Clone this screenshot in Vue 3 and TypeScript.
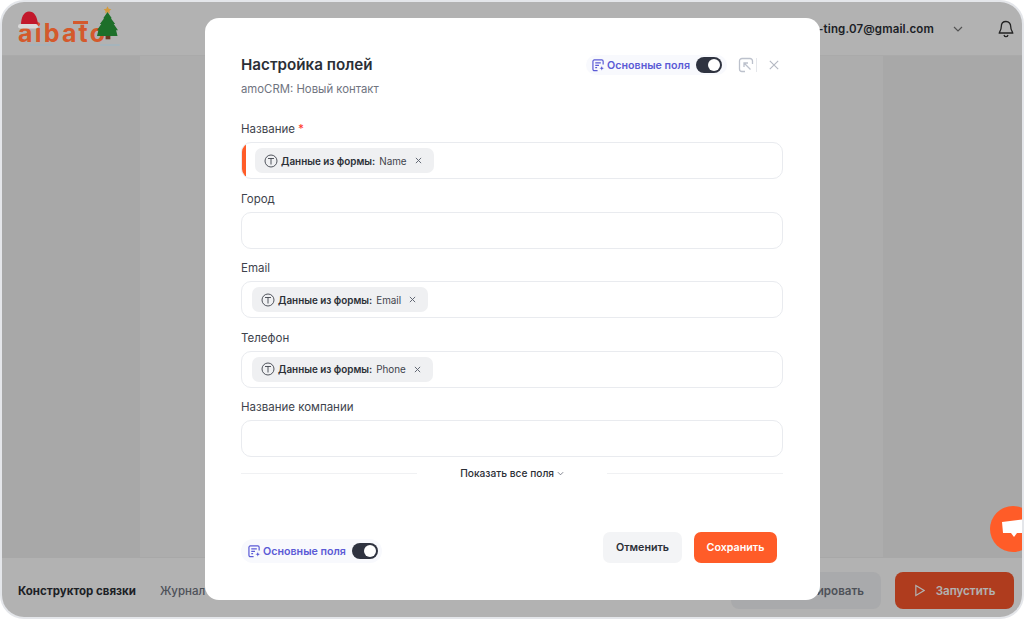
<template>
  <div class="screen">
    <div class="frame">
      <header class="topbar">
        <div class="logo">
          <span class="logo-text">aibato</span>
          <span class="macron"></span>
          <svg class="hat" viewBox="0 0 21 19" width="21" height="19">
            <path d="M3 14C3 6 6 .5 11 .5c5 0 8 4 9 13v1H3z" fill="#c2182b" />
            <rect x="0" y="13" width="20" height="4.500" rx="2.200" fill="#d9d9d9" />
          </svg>
          <svg class="tree" viewBox="0 0 22 38" width="21" height="37">
            <path d="M11 0l1.300 2.600 2.700.3-2 1.900.5 2.700L11 6.200 8.500 7.500l.5-2.700-2-1.900 2.700-.3z" fill="#d39a3c" />
            <path d="M11 6l4.500 6.500-1 0 4.500 6-1.500 0 4.500 6.500-2 0 1.500 6H0l1.500-6-1.500 0 4.500-6.500H3l4.500-6-1 0z" fill="#1d6f29" />
            <rect x="9" y="31" width="5" height="3.500" fill="#6b3a20" />
          </svg>
          <span class="snow a"></span>
          <span class="snow b"></span>
        </div>
        <div class="user">
          <span class="email">tatiana-ting.07@gmail.com</span>
          <svg class="chev" viewBox="0 0 10 6" width="10" height="6"><path d="M1 1l4 4 4-4" /></svg>
          <svg class="bell" viewBox="0 0 16 18" width="16" height="18">
            <path d="M8 1.500c-3 0-4.700 2.200-4.700 5 0 3.500-1.800 5-2 6.500h13.400c-.2-1.500-2-3-2-6.500 0-2.800-1.700-5-4.700-5zM6 15c.3 1.100 1 1.700 2 1.700s1.700-.6 2-1.700" />
          </svg>
        </div>
      </header>

      <main class="canvas">
        <div class="side left"></div>
        <div class="middle"></div>
        <div class="side right"></div>
      </main>

      <footer class="bottombar">
        <div class="tabs">
          <span class="tab active">Конструктор связки</span>
          <span class="tab">Журнал</span>
        </div>
        <div class="actions">
          <button class="btn-test">Тестировать</button>
          <button class="btn-run">
            <svg viewBox="0 0 12 14" width="11" height="13"><path d="M2 1.500l9 5.500-9 5.500z" /></svg>
            Запустить
          </button>
        </div>
      </footer>

      <div class="overlay"></div>

      <div class="chat-bubble">
        <svg viewBox="0 0 24 20" width="24" height="20"><path d="M0 3l24-3v14H15l-3 4-3-4H1z" fill="#fff" /></svg>
      </div>
    </div>

    <section class="modal">
      <div class="modal-head">
        <div>
          <h2>Настройка полей</h2>
          <p>amoCRM: Новый контакт</p>
        </div>
        <div class="head-tools">
          <div class="pill">
            <svg class="pill-icon" viewBox="0 0 14 14" width="13" height="13">
              <path d="M6 12.500H2.500a1.500 1.500 0 0 1-1.500-1.500V2.500A1.500 1.500 0 0 1 2.500 1h8A1.500 1.500 0 0 1 12 2.500V6M3.500 4.200h6M3.500 6.800h4M3.500 9.300h2" />
              <path class="spark" d="M10.500 7l.9 2.100 2.100.9-2.100.9-.9 2.100-.9-2.100-2.100-.9 2.100-.9z" />
            </svg>
            <span>Основные поля</span>
            <span class="switch"><i></i></span>
          </div>
          <span class="collapse-btn">
            <svg viewBox="0 0 16 16" width="16" height="16">
              <path d="M14.500 7V4A2.500 2.500 0 0 0 12 1.500H4A2.500 2.500 0 0 0 1.500 4v8A2.500 2.500 0 0 0 4 14.500h3M6 10V6h4M6 6l6.500 6.500" />
            </svg>
          </span>
          <span class="sep"></span>
          <svg class="close" viewBox="0 0 10 10" width="10" height="10"><path d="M.8.800l8.400 8.400M9.200.800L.8 9.200" /></svg>
        </div>
      </div>

      <div class="fields">
        <div v-for="f in fields" :key="f.label" class="field">
          <label>{{ f.label }}<b v-if="f.required"> *</b></label>
          <div class="input" :class="{ required: f.required }">
            <span v-if="f.value" class="tag">
              <svg class="t-icon" viewBox="0 0 14 14" width="14" height="14">
                <circle cx="7" cy="7" r="6" />
                <path d="M4 4.500h6M7 4.500v6" />
              </svg>
              <strong>Данные из формы:</strong>
              <span>{{ f.value }}</span>
              <svg class="tag-x" viewBox="0 0 8 8" width="7" height="7"><path d="M1 1l6 6M7 1L1 7" /></svg>
            </span>
          </div>
        </div>
      </div>

      <div class="show-all">
        <span class="line"></span>
        <span class="show-text">
          Показать все поля
          <svg viewBox="0 0 8 5" width="7" height="5"><path d="M1 1l3 3 3-3" /></svg>
        </span>
        <span class="line"></span>
      </div>

      <div class="modal-foot">
        <div class="pill big">
          <svg class="pill-icon" viewBox="0 0 14 14" width="13" height="13">
            <path d="M6 12.500H2.500a1.500 1.500 0 0 1-1.500-1.500V2.500A1.500 1.500 0 0 1 2.500 1h8A1.500 1.500 0 0 1 12 2.500V6M3.500 4.200h6M3.500 6.800h4M3.500 9.300h2" />
            <path class="spark" d="M10.500 7l.9 2.100 2.100.9-2.100.9-.9 2.100-.9-2.100-2.100-.9 2.100-.9z" />
          </svg>
          <span>Основные поля</span>
          <span class="switch"><i></i></span>
        </div>
        <div class="foot-btns">
          <button class="cancel">Отменить</button>
          <button class="save">Сохранить</button>
        </div>
      </div>
    </section>
  </div>
</template>

<script setup lang="ts">
const fields: { label: string; value?: string; required?: boolean }[] = [
  { label: 'Название', value: 'Name', required: true },
  { label: 'Город' },
  { label: 'Email', value: 'Email' },
  { label: 'Телефон', value: 'Phone' },
  { label: 'Название компании' }
]
</script>

<style>
html, body { margin: 0; background: #fff; overflow: hidden; }
</style>

<style scoped>
.screen {
  position: relative;
  width: 1024px;
  height: 619px;
  overflow: hidden;
  font-family: Inter, "Noto Sans", sans-serif;
  color: #2b2f36;
  background: #fff;
}
.frame {
  position: relative;
  isolation: isolate;
  box-sizing: border-box;
  height: 619px;
  display: flex;
  flex-direction: column;
  border: 2px solid #e4e6ea;
  border-radius: 24px;
  overflow: hidden;
  background: #fff;
}
.topbar {
  height: 53px;
  flex: none;
  display: flex;
  justify-content: space-between;
  align-items: center;
  border-bottom: 1px solid #f4f4f4;
  box-sizing: content-box;
}
.logo { position: relative; z-index: 2; width: 110px; height: 40px; margin-left: 16px; margin-top: 4px; }
.logo-text {
  position: absolute;
  left: 0;
  top: 7px;
  font-size: 25px;
  line-height: 30px;
  font-weight: 700;
  letter-spacing: 2.200px;
  color: #d4592c;
}
.macron { position: absolute; left: 55px; top: 10px; width: 15px; height: 3px; background: #d4592c; }
.hat { position: absolute; left: 0; top: 0; }
.tree { position: absolute; left: 79px; top: -5px; }
.snow { position: absolute; top: 33px; height: 2px; border-radius: 1px; background: #a5b4bc; }
.snow.a { left: 11px; width: 24px; }
.snow.b { left: 82px; width: 20px; }
.user { display: flex; align-items: center; margin-right: 8px; }
.email { font-size: 11.500px; font-weight: 600; letter-spacing: .14px; color: #2b2f36; }
.chev { margin-left: 19px; fill: none; stroke: #777; stroke-width: 1.200; }
.bell { margin-left: 35px; fill: none; stroke: #333; stroke-width: 1.300; }
.canvas { flex: 1; display: flex; background: #f8f8f8; border-bottom: 1px solid #f1f1f1; }
.side { background: #f1f1f1; }
.side.left { width: 138px; }
.side.right { width: 139px; }
.middle { flex: 1; background: #f8f8f8; }
.bottombar {
  height: 59px;
  flex: none;
  display: flex;
  justify-content: space-between;
  align-items: center;
  padding: 6px 8px 0 16px;
  box-sizing: border-box;
}
.tabs { display: flex; gap: 24px; font-size: 11.500px; font-weight: 500; color: #70747f; }
.tab.active { font-weight: 700; color: #2b2f36; }
.actions { display: flex; gap: 14px; }
.actions button {
  height: 37px;
  border: 0;
  border-radius: 8px;
  font: 600 11.600px Inter, sans-serif;
}
.btn-test { width: 150px; background: #f3f4f6; color: #70747f; text-align: right; padding-right: 17px; }
.btn-run {
  width: 119px;
  background: #fb572b;
  color: #fff;
  display: flex;
  align-items: center;
  justify-content: center;
  gap: 11px;
}
.btn-run svg { fill: none; stroke: #fff; stroke-width: 1.300; }
.overlay { position: absolute; inset: 0; z-index: 1; background: rgba(0, 0, 0, 0.3); }
.chat-bubble {
  position: absolute;
  z-index: 2;
  left: 988px;
  top: 504px;
  width: 46px;
  height: 46px;
  border-radius: 50%;
  background: #ff5c28;
  display: flex;
  align-items: center;
  padding-left: 12px;
  box-sizing: border-box;
}
.modal {
  position: absolute;
  left: 205px;
  top: 18px;
  box-sizing: border-box;
  width: 615px;
  height: 582px;
  padding: 37px 37px 0 36px;
  background: #fff;
  border-radius: 14px;
}
.modal-head { display: flex; justify-content: space-between; align-items: flex-start; height: 64px; }
h2 { margin: 0; font-size: 15.200px; line-height: 20px; font-weight: 600; color: #2b2f36; }
.modal-head p { margin: 5px 0 0; font-size: 11.350px; line-height: 18px; color: #70747f; }
.head-tools { display: flex; align-items: center; height: 20px; margin-right: 4px; }
.pill {
  display: inline-flex;
  align-items: center;
  box-sizing: border-box;
  height: 20px;
  padding: 0 5px 0 6px;
  border-radius: 10px;
  background: #f8f9fd;
  font-size: 10.700px;
  font-weight: 600;
  color: #5b5bd6;
}
.pill.big { height: 24px; border-radius: 12px; padding: 0 4px 0 7px; margin-top: 7px; }
.pill-icon { margin-right: 2px; fill: none; stroke: #5b5bd6; stroke-width: 1.300; }
.pill-icon .spark { fill: #5b5bd6; stroke: #fff; stroke-width: .6; }
.switch {
  margin-left: 6px;
  box-sizing: border-box;
  width: 26px;
  height: 16px;
  border-radius: 8px;
  background: #2f3340;
  display: flex;
  align-items: center;
  justify-content: flex-end;
  padding: 0 2px;
}
.switch i { width: 12px; height: 12px; border-radius: 50%; background: #fff; }
.collapse-btn { display: flex; margin-left: 11px; }
.collapse-btn svg { fill: none; stroke: #bcc1cc; stroke-width: 1.300; }
.sep { width: 1px; height: 14px; background: #e5e7eb; margin-left: 2px; }
.close { margin-left: 12px; fill: none; stroke: #b4b8c2; stroke-width: 1.100; }
.fields { display: flex; flex-direction: column; gap: 9.500px; }
.field label { display: block; height: 19px; font-size: 11.500px; line-height: 21px; color: #3e434c; margin-bottom: 4px; }
.field label b { color: #ff3b30; font-weight: 500; }
.input {
  box-sizing: border-box;
  height: 37px;
  border: 1px solid #e9ebef;
  border-radius: 10px;
  display: flex;
  align-items: center;
  padding-left: 10px;
  position: relative;
  overflow: hidden;
}
.input.required { padding-left: 13px; }
.input.required::before {
  content: "";
  position: absolute;
  left: 0;
  top: 0;
  bottom: 0;
  width: 4px;
  background: #ff5c28;
}
.tag {
  display: inline-flex;
  align-items: center;
  height: 25px;
  padding: 0 12px 0 9px;
  border-radius: 7px;
  background: #eff0f2;
  font-size: 9.900px;
  color: #3e434c;
}
.tag strong { font-weight: 600; margin-right: 4px; color: #2b2f36; }
.t-icon { margin-right: 3px; fill: none; stroke: #3e434c; stroke-width: .9; }
.tag-x { margin-left: 8px; fill: none; stroke: #5e6470; stroke-width: 1.100; }
.show-all { display: flex; align-items: center; margin-top: 7px; height: 18px; }
.line { flex: 1; height: 1px; background: #f0f1f3; }
.show-text { width: 190px; text-align: center; font-size: 10.200px; font-weight: 500; color: #2b2f36; }
.show-text svg { fill: none; stroke: #70747f; stroke-width: 1; vertical-align: 1px; }
.modal-foot {
  display: flex;
  justify-content: space-between;
  align-items: center;
  margin-top: 50px;
  padding-right: 6px;
}
.foot-btns { display: flex; gap: 12px; }
.foot-btns button {
  height: 31px;
  border: 0;
  border-radius: 7px;
  font: 600 10.700px Inter, sans-serif;
}
.cancel { width: 79px; background: #f3f4f6; color: #2b2f36; }
.save { width: 83px; background: #ff5c28; color: #fff; }
</style>
